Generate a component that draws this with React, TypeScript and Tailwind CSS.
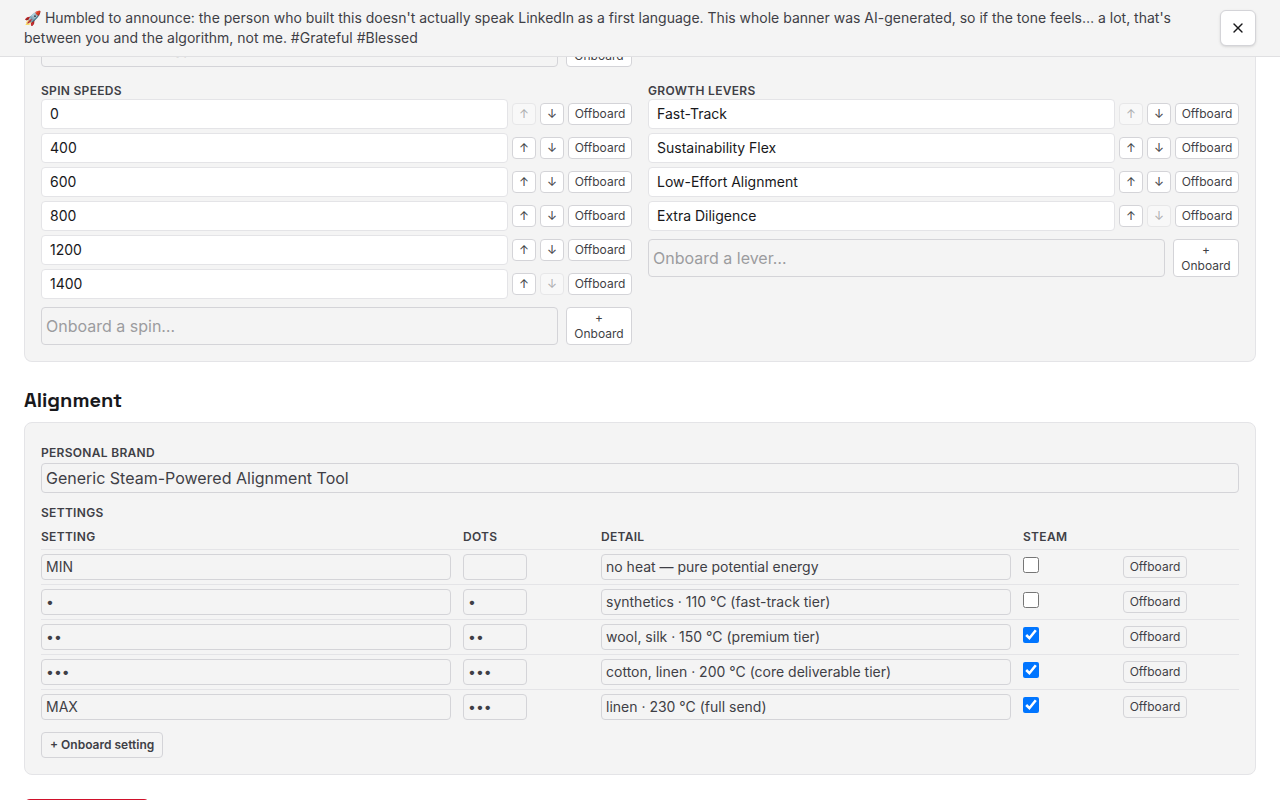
import { X } from "lucide-react";

const labelText = "text-xs leading-4 font-semibold uppercase tracking-wide text-[#3f3f46]";
const smallButton =
  "rounded border border-[#d4d4d8] py-0.5 text-center text-xs leading-4 text-[#3f3f46] disabled:opacity-40";
const field =
  "w-full min-w-0 rounded border border-[#d4d4d8] bg-transparent px-1 text-[#3f3f46] placeholder:text-[#9c9c9f]";
const cellField = `${field} block h-[26px] pb-px text-sm leading-4`;

const spins = ["0", "400", "600", "800", "1200", "1400"];
const levers = ["Fast-Track", "Sustainability Flex", "Low-Effort Alignment", "Extra Diligence"];

const settings = [
  { name: "MIN", dots: "", detail: "no heat — pure potential energy", steam: false },
  { name: "•", dots: "•", detail: "synthetics · 110 °C (fast-track tier)", steam: false },
  { name: "••", dots: "••", detail: "wool, silk · 150 °C (premium tier)", steam: true },
  { name: "•••", dots: "•••", detail: "cotton, linen · 200 °C (core deliverable tier)", steam: true },
  { name: "MAX", dots: "•••", detail: "linen · 230 °C (full send)", steam: true },
];

function AddRow({ placeholder }: { placeholder: string }) {
  return (
    <div className="flex gap-2">
      <input type="text" aria-label={placeholder} placeholder={placeholder} className={`${field} flex-1 text-base`} />
      <button type="button" className={`${smallButton} w-[66px] shrink-0 bg-white px-1.5`}>
        + Onboard
      </button>
    </div>
  );
}

function ListEditor({ title, items, placeholder }: { title: string; items: string[]; placeholder: string }) {
  return (
    <div>
      <h3 className={labelText}>{title}</h3>
      <ul className="mb-2 flex flex-col gap-1">
        {items.map((item, i) => (
          <li key={item} className="flex items-center gap-1">
            <span className="flex-1 rounded border border-[#e4e4e7] bg-white px-2 py-1 text-sm leading-5 text-[#18181b]">
              {item}
            </span>
            <button
              type="button"
              aria-label={`Move ${item} up`}
              disabled={i === 0}
              className={`${smallButton} w-6 bg-white`}
            >
              ↑
            </button>
            <button
              type="button"
              aria-label={`Move ${item} down`}
              disabled={i === items.length - 1}
              className={`${smallButton} w-6 bg-white`}
            >
              ↓
            </button>
            <button type="button" className={`${smallButton} w-16 bg-white`}>
              Offboard
            </button>
          </li>
        ))}
      </ul>
      <AddRow placeholder={placeholder} />
    </div>
  );
}

function SettingsTable() {
  return (
    <table className="w-full table-fixed border-collapse text-left">
      <thead>
        <tr className="border-b border-[#e4e4e7]">
          <th className={`${labelText} pb-1`}>Setting</th>
          <th className={`${labelText} w-[138px] pb-1`}>Dots</th>
          <th className={`${labelText} pb-1`}>Detail</th>
          <th className={`${labelText} w-[100px] pb-1`}>Steam</th>
          <th className="w-[116px]" />
        </tr>
      </thead>
      <tbody>
        {settings.map((row) => (
          <tr key={row.name} className="border-b border-[#e4e4e7] last:border-b-0">
            <td className="py-1 pr-3">
              <input type="text" aria-label="Setting" defaultValue={row.name} className={cellField} />
            </td>
            <td className="py-1 pr-3">
              <div className="w-16">
                <input type="text" aria-label="Dots" defaultValue={row.dots} className={cellField} />
              </div>
            </td>
            <td className="py-1 pr-3">
              <input type="text" aria-label="Detail" defaultValue={row.detail} className={cellField} />
            </td>
            <td className="pt-[7px] align-top">
              <input type="checkbox" aria-label="Steam" defaultChecked={row.steam} className="block size-4" />
            </td>
            <td className="align-middle">
              <button type="button" className={`${smallButton} block w-16`}>
                Offboard
              </button>
            </td>
          </tr>
        ))}
      </tbody>
    </table>
  );
}

export default function App() {
  return (
    <div className="flex h-screen flex-col bg-white font-['Inter',sans-serif] text-[#18181b]">
      <header className="flex shrink-0 items-center gap-4 border-b border-[#e0e0e2] bg-[#f4f4f4] px-6 py-2">
        <p className="flex-1 text-sm leading-5 text-[#3f3f46]">
          🚀 Humbled to announce: the person who built this doesn't actually speak LinkedIn as a first language. This
          whole banner was AI-generated, so if the tone feels… a lot, that's between you and the algorithm, not me.
          #Grateful #Blessed
        </p>
        <button
          type="button"
          aria-label="Dismiss"
          className="flex size-9 items-center justify-center rounded-md border border-[#d4d4d8] bg-white shadow-sm"
        >
          <X size={16} />
        </button>
      </header>

      <main className="min-h-0 flex-1 overflow-hidden px-6">
        <section className="-mt-7 rounded-b-lg border border-t-0 border-[#e4e4e7] bg-[#f4f4f4] px-4 pb-4">
          <div className="grid grid-cols-2 gap-4">
            <AddRow placeholder="Onboard a strategy…" />
            <div />
            <ListEditor title="Spin speeds" items={spins} placeholder="Onboard a spin…" />
            <ListEditor title="Growth levers" items={levers} placeholder="Onboard a lever…" />
          </div>
        </section>

        <h2 className="mt-6 mb-2 font-['Space_Grotesk','Inter',sans-serif] text-xl leading-7 font-bold">Alignment</h2>

        <section className="rounded-lg border border-[#e4e4e7] bg-[#f4f4f4] p-4">
          <label htmlFor="brand" className={`${labelText} block pt-1.5 pb-0.5`}>
            Personal brand
          </label>
          <input
            id="brand"
            type="text"
            defaultValue="Generic Steam-Powered Alignment Tool"
            className={`${field} block h-[30px] text-base`}
          />
          <h3 className={`${labelText} mt-3 mb-2`}>Settings</h3>
          <SettingsTable />
          <button
            type="button"
            className="mt-2 block rounded border border-[#d4d4d8] px-2 py-1 text-xs leading-4 font-semibold text-[#3f3f46]"
          >
            + Onboard setting
          </button>
        </section>

        <button type="button" aria-label="Save" className="mt-6 block h-9 w-[126px] rounded-md bg-[#d0112b]" />
      </main>
    </div>
  );
}
